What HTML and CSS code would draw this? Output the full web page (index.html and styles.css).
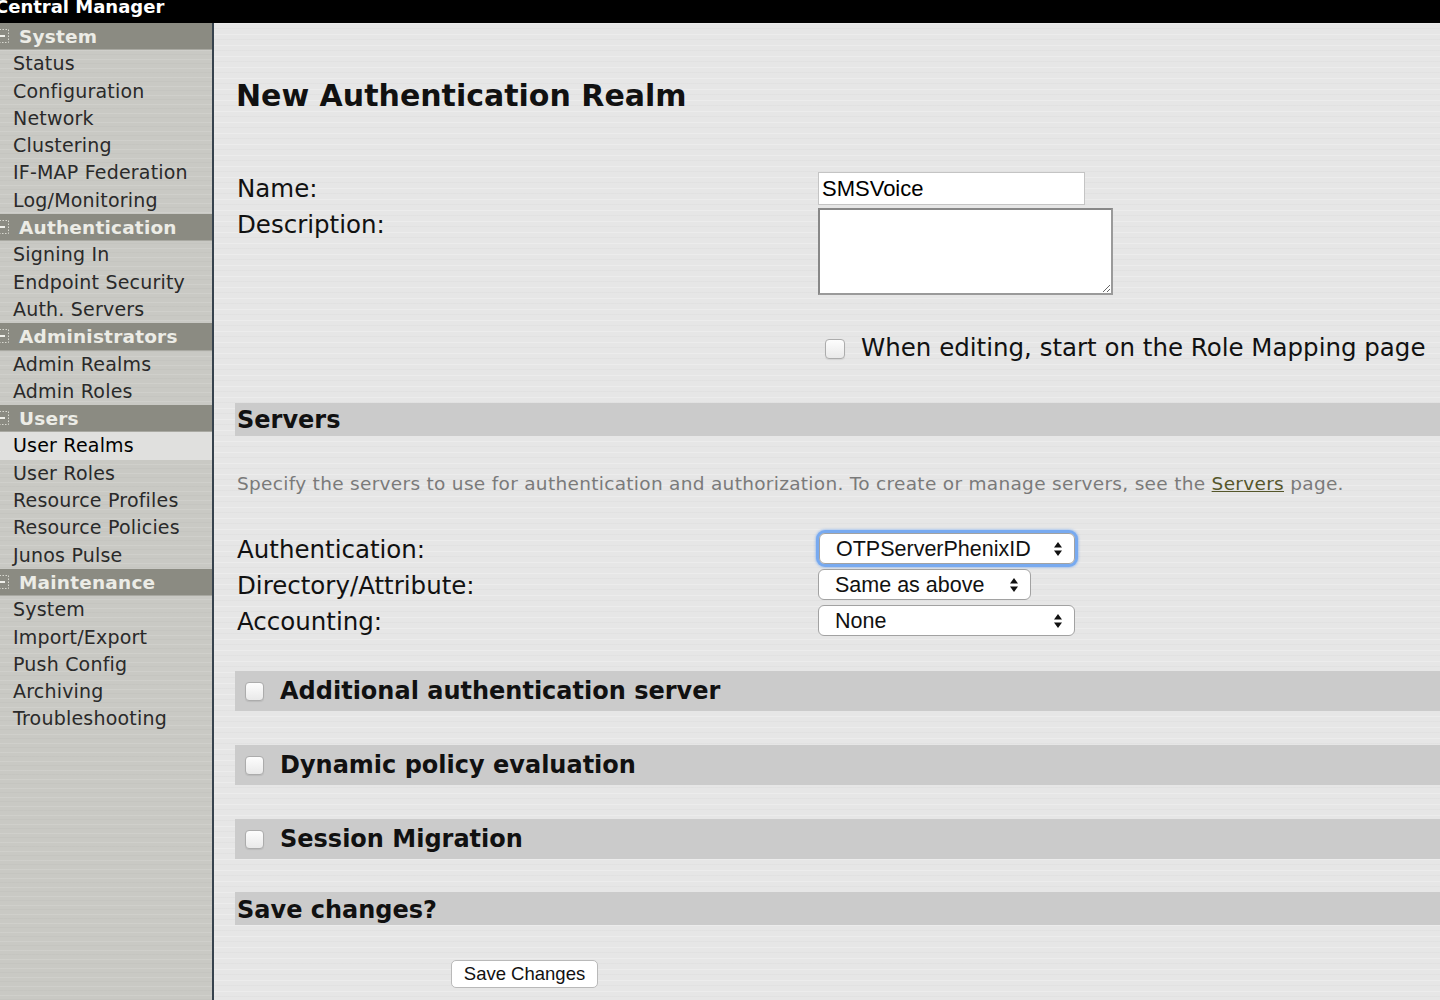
FILE: index.html
```html
<!DOCTYPE html>
<html lang="en">
<head>
    <meta charset="UTF-8">
    <meta name="viewport" content="width=device-width, initial-scale=1.0">
    <title>Central Manager - New Authentication Realm</title>
    <link rel="stylesheet" href="styles.css">
</head>
<body>
    <div class="topbar"><span class="brand">Central Manager</span></div>
    <div class="layout">
        <div class="sidebar">
            <div class="nav-head"><svg class="toggle" width="13" height="14" viewBox="0 0 13 14"><rect x="0.5" y="0.5" width="12" height="13" fill="none" stroke="#d8d8d0" stroke-dasharray="1.5 1.5"/><line x1="0" y1="7" x2="9" y2="7" stroke="#f0f0ea" stroke-width="2"/></svg>System</div>
            <a class="nav-item">Status</a>
            <a class="nav-item">Configuration</a>
            <a class="nav-item">Network</a>
            <a class="nav-item">Clustering</a>
            <a class="nav-item">IF-MAP Federation</a>
            <a class="nav-item">Log/Monitoring</a>
            <div class="nav-head"><svg class="toggle" width="13" height="14" viewBox="0 0 13 14"><rect x="0.5" y="0.5" width="12" height="13" fill="none" stroke="#d8d8d0" stroke-dasharray="1.5 1.5"/><line x1="0" y1="7" x2="9" y2="7" stroke="#f0f0ea" stroke-width="2"/></svg>Authentication</div>
            <a class="nav-item">Signing In</a>
            <a class="nav-item">Endpoint Security</a>
            <a class="nav-item">Auth. Servers</a>
            <div class="nav-head"><svg class="toggle" width="13" height="14" viewBox="0 0 13 14"><rect x="0.5" y="0.5" width="12" height="13" fill="none" stroke="#d8d8d0" stroke-dasharray="1.5 1.5"/><line x1="0" y1="7" x2="9" y2="7" stroke="#f0f0ea" stroke-width="2"/></svg>Administrators</div>
            <a class="nav-item">Admin Realms</a>
            <a class="nav-item">Admin Roles</a>
            <div class="nav-head"><svg class="toggle" width="13" height="14" viewBox="0 0 13 14"><rect x="0.5" y="0.5" width="12" height="13" fill="none" stroke="#d8d8d0" stroke-dasharray="1.5 1.5"/><line x1="0" y1="7" x2="9" y2="7" stroke="#f0f0ea" stroke-width="2"/></svg>Users</div>
            <a class="nav-item active">User Realms</a>
            <a class="nav-item">User Roles</a>
            <a class="nav-item">Resource Profiles</a>
            <a class="nav-item">Resource Policies</a>
            <a class="nav-item">Junos Pulse</a>
            <div class="nav-head"><svg class="toggle" width="13" height="14" viewBox="0 0 13 14"><rect x="0.5" y="0.5" width="12" height="13" fill="none" stroke="#d8d8d0" stroke-dasharray="1.5 1.5"/><line x1="0" y1="7" x2="9" y2="7" stroke="#f0f0ea" stroke-width="2"/></svg>Maintenance</div>
            <a class="nav-item">System</a>
            <a class="nav-item">Import/Export</a>
            <a class="nav-item">Push Config</a>
            <a class="nav-item">Archiving</a>
            <a class="nav-item">Troubleshooting</a>
        </div>

        <div class="main">
            <h1>New Authentication Realm</h1>

            <div class="form-grid">
                <label class="field-label">Name:</label>
                <div><input type="text" class="text-input" value="SMSVoice"></div>
                <label class="field-label">Description:</label>
                <div><textarea class="desc-input"></textarea></div>
            </div>

            <div class="start-row">
                <input type="checkbox" class="check">
                <span>When editing, start on the Role Mapping page</span>
            </div>

            <h2 class="band">Servers</h2>
            <p class="hint">Specify the servers to use for authentication and authorization. To create or manage servers, see the <a href="#" class="link">Servers</a> page.</p>

            <div class="form-grid servers">
                <label class="field-label">Authentication:</label>
                <div><span class="select-wrap focused w-auth"><select class="select"><option>OTPServerPhenixID</option></select><svg class="arrows" width="10" height="16" viewBox="0 0 10 16"><path d="M1 6.5 L5 1 L9 6.5 Z M1 9.5 L5 15 L9 9.5 Z" fill="#111"/></svg></span></div>
                <label class="field-label">Directory/Attribute:</label>
                <div><span class="select-wrap w-dir"><select class="select"><option>Same as above</option></select><svg class="arrows" width="10" height="16" viewBox="0 0 10 16"><path d="M1 6.5 L5 1 L9 6.5 Z M1 9.5 L5 15 L9 9.5 Z" fill="#111"/></svg></span></div>
                <label class="field-label">Accounting:</label>
                <div><span class="select-wrap w-acct"><select class="select"><option>None</option></select><svg class="arrows" width="10" height="16" viewBox="0 0 10 16"><path d="M1 6.5 L5 1 L9 6.5 Z M1 9.5 L5 15 L9 9.5 Z" fill="#111"/></svg></span></div>
            </div>

            <div class="band check-band">
                <input type="checkbox" class="check small">
                <span>Additional authentication server</span>
            </div>
            <div class="band check-band">
                <input type="checkbox" class="check small">
                <span>Dynamic policy evaluation</span>
            </div>
            <div class="band check-band">
                <input type="checkbox" class="check small">
                <span>Session Migration</span>
            </div>

            <h2 class="band save-band">Save changes?</h2>
            <button class="save-btn">Save Changes</button>
        </div>
    </div>
</body>
</html>
```

FILE: styles.css
```css
html, body {
    margin: 0;
    padding: 0;
    height: 100%;
}
body {
    font-family: "DejaVu Sans", Verdana, sans-serif;
    color: #111;
    display: flex;
    flex-direction: column;
    overflow: hidden;
}
.topbar {
    height: 23px;
    background-color: #000;
    overflow: hidden;
    flex-shrink: 0;
}
.brand {
    display: block;
    color: #fff;
    font-weight: bold;
    font-size: 18px;
    line-height: 18px;
    margin-left: -5px;
    margin-top: -2px;
}
.layout {
    flex: 1;
    display: flex;
}
.sidebar {
    width: 212px;
    flex-shrink: 0;
    border-right: 2px solid #36424d;
    background-color: #c9c9c4;
    background-image: repeating-linear-gradient(180deg, rgba(255,255,255,0.12) 0 1px, transparent 1px 4px, rgba(0,0,0,0.02) 4px 5px, transparent 5px 9px);
}
.nav-head {
    height: 27.3px;
    box-sizing: border-box;
    display: flex;
    align-items: center;
    background-color: #8b8b82;
    border-bottom: 1px solid #a9a9a2;
    color: #ecece6;
    font-weight: bold;
    font-size: 18.5px;
    letter-spacing: 0.2px;
}
.toggle {
    margin-left: -4px;
    margin-right: 10px;
}
.nav-item {
    display: block;
    height: 27.3px;
    line-height: 27.3px;
    padding-left: 13px;
    font-size: 19px;
    letter-spacing: 0.2px;
    color: #2a2a2a;
}
.nav-item.active {
    background-color: #e0e0de;
    color: #000;
}
.main {
    flex: 1;
    padding-left: 21px;
    background-color: #e6e6e6;
    background-image: repeating-linear-gradient(180deg, rgba(255,255,255,0.25) 0 1px, transparent 1px 5px, rgba(0,0,0,0.018) 5px 6px, transparent 6px 11px);
}
h1 {
    font-size: 30px;
    line-height: 34px;
    margin: 56px 0 0 1px;
}
.form-grid {
    display: grid;
    grid-template-columns: 583px auto;
    row-gap: 3px;
    margin-top: 59px;
}
.field-label {
    font-size: 24.5px;
    line-height: 33px;
    padding-left: 2px;
}
.text-input {
    box-sizing: border-box;
    width: 267px;
    height: 33px;
    border: 1px solid #c4c4c4;
    padding: 0 3px;
    font-family: "Liberation Sans", Arial, sans-serif;
    font-size: 22px;
    background: #fff;
    display: block;
}
.desc-input {
    box-sizing: border-box;
    width: 295px;
    height: 87px;
    border: 2px solid #888;
    border-right-color: #9a9a9a;
    border-bottom-color: #9a9a9a;
    background: #fff;
    display: block;
    margin: 0;
}
.start-row {
    margin: 36px 0 0 590px;
    height: 33px;
    display: flex;
    align-items: center;
    font-size: 24.5px;
}
.check {
    appearance: none;
    -webkit-appearance: none;
    width: 20px;
    height: 20px;
    margin: 2px 16px 0 0;
    border: 1px solid #acacac;
    border-radius: 4px;
    background: linear-gradient(#fdfdfd, #e9e9e9);
    box-shadow: 0 1px 1px rgba(0,0,0,0.08);
    flex-shrink: 0;
}
.check.small {
    width: 19px;
    height: 19px;
    margin: 0 16px 0 10px;
}
.band {
    background-color: #cbcbcb;
    font-size: 24px;
    font-weight: bold;
    margin: 0;
    padding-left: 2px;
}
h2.band {
    height: 33px;
    line-height: 35px;
    margin-top: 39px;
}
.hint {
    font-size: 18.5px;
    letter-spacing: 0.3px;
    line-height: 24px;
    color: #7a7a7a;
    margin: 36px 0 0 2px;
}
.link {
    color: #55562a;
}
.servers {
    margin-top: 37px;
    row-gap: 4px;
    grid-auto-rows: 32px;
}
.select-wrap {
    position: relative;
    display: inline-block;
    margin-left: 0;
    border-radius: 6px;
}
.select-wrap.focused {
    margin-left: 1px;
    box-shadow: 0 0 0 3px #78aaf0, 0 0 2px 4px rgba(120,170,240,0.5);
}
.select {
    appearance: none;
    -webkit-appearance: none;
    box-sizing: border-box;
    height: 31px;
    border: 1px solid #a2a2a2;
    border-radius: 6px;
    background: #fff;
    font-family: "Liberation Sans", Arial, sans-serif;
    font-size: 21.5px;
    color: #111;
    padding: 0 0 0 16px;
    display: block;
}
.w-auth .select { width: 256px; }
.w-dir .select { width: 213px; }
.w-acct .select { width: 257px; }
.arrows {
    position: absolute;
    right: 12px;
    top: 8px;
}
.check-band {
    display: flex;
    align-items: center;
    height: 40px;
    margin-top: 34px;
    padding-left: 0;
}
.save-band {
    height: 32px;
}
h2.save-band {
    margin-top: 33px;
    line-height: 36px;
}
.save-btn {
    display: block;
    margin: 35px 0 0 216px;
    width: 147px;
    height: 28px;
    border: 1px solid #b9b9b9;
    border-radius: 5px;
    background: #fff;
    font-family: "Liberation Sans", Arial, sans-serif;
    font-size: 18.5px;
    color: #111;
    padding: 0;
}
```
